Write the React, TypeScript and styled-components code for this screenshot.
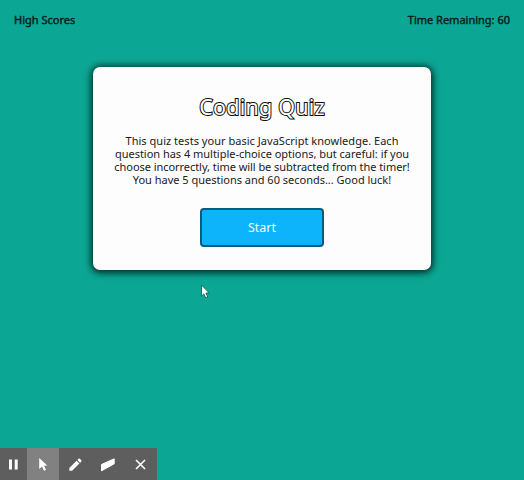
import React from "react";
import styled, { createGlobalStyle } from "styled-components";

const GlobalStyle = createGlobalStyle`
  * { box-sizing: border-box; }
  html, body { margin: 0; padding: 0; }
  body { background: #0ca794; overflow: hidden; font-family: "Noto Sans", "Open Sans", sans-serif; }
`;

const Page = styled.div`
  position: relative;
  display: flex;
  flex-direction: column;
  width: 524px;
  height: 480px;
  background: #0ca794;
`;

const Header = styled.header`
  display: flex;
  justify-content: space-between;
  height: 67px;
  padding: 12px 14px 0 14px;
`;

const HeaderText = styled.span`
  font-size: 11px;
  line-height: 15px;
  height: 15px;
  white-space: nowrap;
  color: #041f1d;
  -webkit-text-stroke: 0.45px #041f1d;
`;

const Card = styled.main`
  display: flex;
  flex-direction: column;
  align-items: center;
  width: 338px;
  height: 203px;
  margin-left: 93px;
  padding-top: 24px;
  border-radius: 7px;
  background: #fdfdfd;
  box-shadow: 0 1px 7px 2px #002b27;
`;

const Title = styled.h1`
  margin: 0;
  height: 32px;
  font-size: 21.5px;
  line-height: 32px;
  font-weight: 400;
  letter-spacing: 0.2px;
  white-space: nowrap;
  color: #fff;
  -webkit-text-stroke: 2px #0c0c0c;
  paint-order: stroke fill;
`;

const Intro = styled.p`
  margin: 11px 0 0;
  text-align: center;
  color: #202020;
  font-size: 11px;
  line-height: 13px;
`;

const Line = styled.span<{ $spacing: number }>`
  display: block;
  white-space: nowrap;
  letter-spacing: ${(p) => p.$spacing}px;
`;

const StartButton = styled.button`
  width: 124px;
  height: 39px;
  margin-top: 22px;
  padding: 0;
  border: 2px solid #075a82;
  border-radius: 4px;
  background: #0db4fb;
  color: #f2fbff;
  font: 400 12.5px/34px "Noto Sans", sans-serif;
`;

const Toolbar = styled.nav`
  display: flex;
  width: 157px;
  height: 32px;
  margin-top: auto;
  background: #5e5e5e;
`;

const Tool = styled.button<{ $width: number; $active?: boolean }>`
  display: flex;
  align-items: center;
  justify-content: center;
  width: ${(p) => p.$width}px;
  height: 32px;
  padding: 0;
  border: 0;
  background: ${(p) => (p.$active ? "#818181" : "transparent")};
  svg { display: block; }
`;

const Pointer = styled.svg`
  position: absolute;
  left: 200px;
  top: 284px;
`;

const lines = [
  { text: "This quiz tests your basic JavaScript knowledge. Each", spacing: 0.03 },
  { text: "question has 4 multiple-choice options, but careful: if you", spacing: -0.02 },
  { text: "choose incorrectly, time will be subtracted from the timer!", spacing: -0.05 },
  { text: "You have 5 questions and 60 seconds... Good luck!", spacing: -0.01 },
];

export default function App() {
  return (
    <>
      <GlobalStyle />
      <Page>
        <Header>
          <HeaderText>High Scores</HeaderText>
          <HeaderText>Time Remaining: 60</HeaderText>
        </Header>
        <Card>
          <Title>Coding Quiz</Title>
          <Intro>
            {lines.map((l) => (
              <Line key={l.text} $spacing={l.spacing}>{l.text}</Line>
            ))}
          </Intro>
          <StartButton>Start</StartButton>
        </Card>
        <Toolbar>
          <Tool $width={27} aria-label="Pause">
            <svg width="27" height="32" fill="#fff"><path d="M9 11.5h3v10H9zM14.7 11.5h3v10h-3z" /></svg>
          </Tool>
          <Tool $width={32} $active aria-label="Pointer">
            <svg width="32" height="32" fill="#fff"><path d="M12.2 10v11l2.8-2.5 2 4.3 2-.9-2-4.2 3.3-.3z" /></svg>
          </Tool>
          <Tool $width={33} aria-label="Pen">
            <svg width="33" height="32" fill="#fff"><path d="M10.3 22.7v-2.8l7.3-7.2 2.8 2.8-7.3 7.2zM18.4 12l1.2-1.2q.7-.5 1.3 0l1.4 1.4q.6.7 0 1.3l-1.2 1.2z" /></svg>
          </Tool>
          <Tool $width={32} aria-label="Eraser">
            <svg width="32" height="32" fill="#fff"><path d="M9.5 16.5 22.2 10.8v5L9.5 22.8z" stroke="#fff" strokeLinejoin="round" /></svg>
          </Tool>
          <Tool $width={32} aria-label="Close">
            <svg width="32" height="32" fill="none" stroke="#fff" strokeWidth="1.6"><path d="m12 12 9 9m0-9-9 9" /></svg>
          </Tool>
        </Toolbar>
        <Pointer width="12" height="16" viewBox="0 0 12 16">
          <path d="M1.5 1v11.2l2.4-2.3 1.9 4 2-.9-1.9-3.9 3.3-.2z" fill="#fff" stroke="#075650" strokeWidth=".8" />
        </Pointer>
      </Page>
    </>
  );
}
